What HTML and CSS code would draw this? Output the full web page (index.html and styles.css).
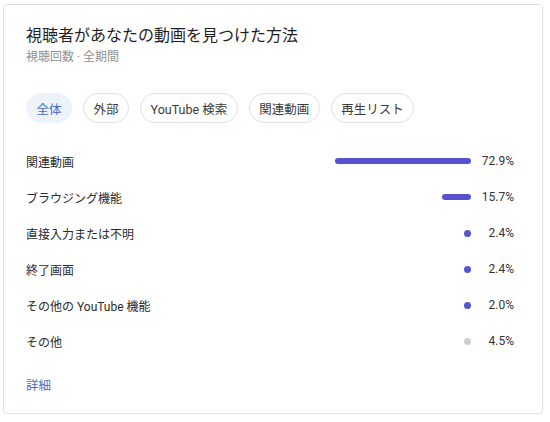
FILE: index.html
```html
<!DOCTYPE html>
<html lang="ja">
<head>
<meta charset="utf-8">
<link rel="stylesheet" href="styles.css">
</head>
<body>
<div class="card">
  <h1 class="title">視聴者があなたの動画を見つけた方法</h1>
  <div class="subtitle">視聴回数 · 全期間</div>
  <div class="chips">
    <span class="chip active">全体</span>
    <span class="chip">外部</span>
    <span class="chip">YouTube 検索</span>
    <span class="chip">関連動画</span>
    <span class="chip">再生リスト</span>
  </div>
  <div class="rows">
    <div class="row"><span class="label">関連動画</span><span class="track"><span class="bar" style="width:136px"></span></span><span class="pct">72.9%</span></div>
    <div class="row"><span class="label">ブラウジング機能</span><span class="track"><span class="bar" style="width:29px"></span></span><span class="pct">15.7%</span></div>
    <div class="row"><span class="label">直接入力または不明</span><span class="track"><span class="dot"></span></span><span class="pct">2.4%</span></div>
    <div class="row"><span class="label">終了画面</span><span class="track"><span class="dot"></span></span><span class="pct">2.4%</span></div>
    <div class="row"><span class="label">その他の YouTube 機能</span><span class="track"><span class="dot"></span></span><span class="pct">2.0%</span></div>
    <div class="row"><span class="label">その他</span><span class="track"><span class="dot gray"></span></span><span class="pct">4.5%</span></div>
  </div>
  <a class="more" href="#">詳細</a>
</div>
</body>
</html>
```
FILE: styles.css
```css
* { box-sizing: border-box; }
html, body { margin: 0; padding: 0; background: #ffffff; }
body {
  font-family: Roboto, "Noto Sans CJK JP", "Noto Sans", sans-serif;
  color: #282828;
}
.card {
  margin: 4px 0 0 3px;
  width: 540px;
  height: 410px;
  border: 1px solid #e2e2e2;
  border-radius: 4px;
  box-shadow: 0 1px 2px rgba(0,0,0,0.04);
  padding: 19px 28px 0 22px;
  background: #fff;
}
.title {
  margin: 0;
  font-size: 16px;
  line-height: 24px;
  font-weight: 400;
  color: #1f1f1f;
}
.subtitle {
  font-size: 12px;
  line-height: 18px;
  color: #909090;
}
.chips {
  display: flex;
  gap: 11px;
  margin-top: 27px;
  margin-left: 0;
}
.chip {
  display: inline-flex;
  align-items: center;
  height: 30px;
  padding: 0 9.5px;
  border: 1px solid #e0e0e0;
  border-radius: 15px;
  font-size: 12.5px;
  color: #3a3a3a;
  white-space: nowrap;
}
.chip.active {
  background: #eef3fb;
  border-color: #eef3fb;
  color: #3f6fc7;
}
.rows { margin-top: 20px; }
.row {
  display: flex;
  align-items: center;
  height: 36px;
  font-size: 12px;
}
.label { flex: 1; color: #2b2b2b; }
.track {
  width: 136px;
  display: flex;
  justify-content: flex-end;
  align-items: center;
}
.bar {
  height: 6px;
  border-radius: 3px;
  background: #5753d0;
}
.dot {
  width: 7px;
  height: 7px;
  border-radius: 50%;
  background: #5753d0;
}
.dot.gray { background: #cfcfcf; }
.pct {
  width: 43px;
  text-align: right;
  color: #333;
}
.more {
  display: block;
  margin-top: 18px;
  font-size: 12.5px;
  line-height: 18px;
  color: #3f6fc7;
  text-decoration: none;
  width: max-content;
}
```
